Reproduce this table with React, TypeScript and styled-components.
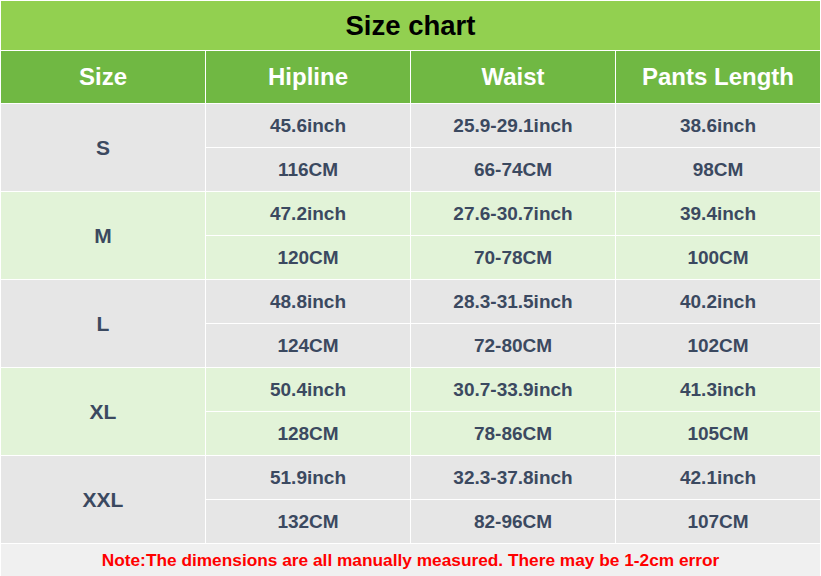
import React from 'react'
import styled, { createGlobalStyle } from 'styled-components'

const Global = createGlobalStyle`
  body {
    margin: 0;
    background: #ffffff;
    font-family: "Liberation Sans", Arial, sans-serif;
  }
`

const sizes = [
  { size: 'S', hip: ['45.6inch', '116CM'], waist: ['25.9-29.1inch', '66-74CM'], length: ['38.6inch', '98CM'] },
  { size: 'M', hip: ['47.2inch', '120CM'], waist: ['27.6-30.7inch', '70-78CM'], length: ['39.4inch', '100CM'] },
  { size: 'L', hip: ['48.8inch', '124CM'], waist: ['28.3-31.5inch', '72-80CM'], length: ['40.2inch', '102CM'] },
  { size: 'XL', hip: ['50.4inch', '128CM'], waist: ['30.7-33.9inch', '78-86CM'], length: ['41.3inch', '105CM'] },
  { size: 'XXL', hip: ['51.9inch', '132CM'], waist: ['32.3-37.8inch', '82-96CM'], length: ['42.1inch', '107CM'] },
]

const App = () => {
  return (
    <>
      <Global />
      <Chart>
        <Title>Size chart</Title>
        <Head>Size</Head>
        <Head>Hipline</Head>
        <Head>Waist</Head>
        <Head>Pants Length</Head>
        {sizes.map((el, i) => (
          <React.Fragment key={el.size}>
            <SizeCell alt={i % 2 === 1}>{el.size}</SizeCell>
            <Cell alt={i % 2 === 1}>{el.hip[0]}</Cell>
            <Cell alt={i % 2 === 1}>{el.waist[0]}</Cell>
            <Cell alt={i % 2 === 1}>{el.length[0]}</Cell>
            <Cell alt={i % 2 === 1}>{el.hip[1]}</Cell>
            <Cell alt={i % 2 === 1}>{el.waist[1]}</Cell>
            <Cell alt={i % 2 === 1}>{el.length[1]}</Cell>
          </React.Fragment>
        ))}
        <Note>Note:The dimensions are all manually measured. There may be 1-2cm error</Note>
      </Chart>
    </>
  )
}

export default App

const Chart = styled.div`
  width: 821px;
  height: 576px;
  box-sizing: border-box;
  padding: 1px 1px 0 1px;
  display: grid;
  grid-template-columns: repeat(4, 204px);
  grid-template-rows: 49px 52px repeat(10, 43px) 32px;
  gap: 1px;
  background: #ffffff;
`

const Title = styled.div`
  grid-column: 1 / -1;
  background: #92d050;
  color: #000;
  font-size: 27.5px;
  font-weight: 700;
  display: flex;
  justify-content: center;
  align-items: center;
`

const Head = styled.div`
  background: #70b843;
  color: #fff;
  font-size: 24px;
  font-weight: 700;
  display: flex;
  justify-content: center;
  align-items: center;
`

const Cell = styled.div<{ alt: boolean }>`
  background: ${({ alt }) => (alt ? '#e2f3d8' : '#e6e6e6')};
  color: #3b4960;
  font-size: 19px;
  font-weight: 700;
  display: flex;
  justify-content: center;
  align-items: center;
`

const SizeCell = styled(Cell)`
  grid-row: span 2;
  font-size: 21px;
`

const Note = styled.div`
  grid-column: 1 / -1;
  background: #f0f0f0;
  color: #ff0000;
  font-size: 17.3px;
  font-weight: 700;
  display: flex;
  justify-content: center;
  align-items: center;
`
